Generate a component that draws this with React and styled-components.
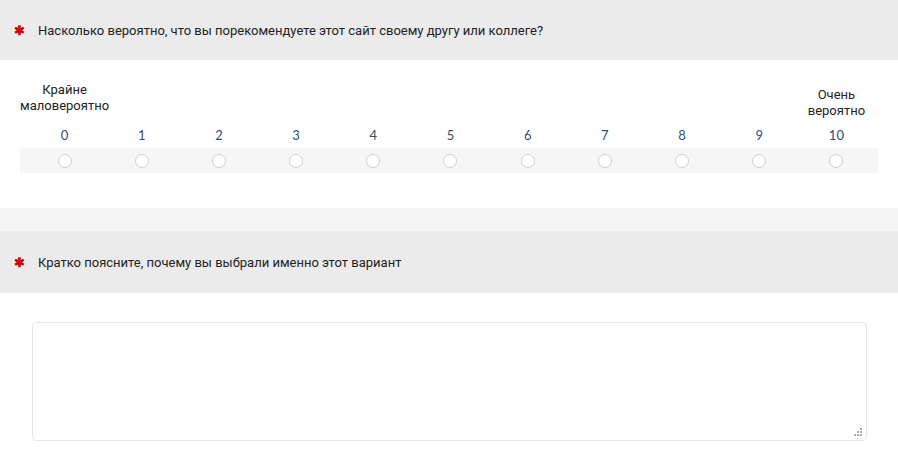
import React from 'react'
import styled, { createGlobalStyle } from 'styled-components'

const GlobalStyle = createGlobalStyle`
    html, body {
        margin: 0;
        padding: 0;
        background: #ffffff;
        overflow: hidden;
    }
    body {
        font-family: Roboto, "Noto Sans", Arial, sans-serif;
        color: #222222;
    }
`

const scale = [0, 1, 2, 3, 4, 5, 6, 7, 8, 9, 10]

function App() {
    return (
        <>
            <GlobalStyle />
            <Page>
                <QuestionHeader $height={60}>
                    <Required>✱</Required>
                    <span>Насколько вероятно, что вы порекомендуете этот сайт своему другу или коллеге?</span>
                </QuestionHeader>

                <ScaleBody>
                    <ScaleGrid>
                        {scale.map((n) => (
                            <LabelCell key={n} $drop={n === 10}>
                                {n === 0 && <span>Крайне<br />маловероятно</span>}
                                {n === 10 && <span>Очень<br />вероятно</span>}
                            </LabelCell>
                        ))}
                    </ScaleGrid>
                    <ScaleGrid>
                        {scale.map((n) => (
                            <Number key={n}>{n}</Number>
                        ))}
                    </ScaleGrid>
                    <RadioRow>
                        {scale.map((n) => (
                            <RadioCell key={n}>
                                <Radio type='radio' name='nps' aria-label={String(n)} />
                            </RadioCell>
                        ))}
                    </RadioRow>
                </ScaleBody>

                <Spacer />

                <QuestionHeader $height={62}>
                    <Required>✱</Required>
                    <span>Кратко поясните, почему вы выбрали именно этот вариант</span>
                </QuestionHeader>

                <AnswerBody>
                    <TextBox>
                        <TextArea />
                        <Grip width='10' height='10' viewBox='0 0 10 10'>
                            <rect x='7' y='1' width='2' height='2' />
                            <rect x='4' y='4' width='2' height='2' />
                            <rect x='7' y='4' width='2' height='2' />
                            <rect x='1' y='7' width='2' height='2' />
                            <rect x='4' y='7' width='2' height='2' />
                            <rect x='7' y='7' width='2' height='2' />
                        </Grip>
                    </TextBox>
                </AnswerBody>
            </Page>
        </>
    )
}

export default App

const Page = styled.div`
    width: 898px;
    display: flex;
    flex-direction: column;
`

const QuestionHeader = styled.div`
    height: ${({ $height }) => $height}px;
    background: #ebebeb;
    display: flex;
    align-items: center;
    padding-left: 14px;
    gap: 14px;
    font-size: 13px;
    color: #222222;
`

const Required = styled.span`
    color: #cc0000;
    font-size: 13px;
    width: 10px;
    line-height: 1;
    font-weight: bold;
`

const ScaleBody = styled.div`
    padding: 21px 20px 35px 20px;
    display: flex;
    flex-direction: column;
`

const ScaleGrid = styled.div`
    display: grid;
    grid-template-columns: repeat(11, minmax(0, 1fr));
    width: 858px;
    box-sizing: border-box;
    padding-left: 6px;
    padding-right: 3px;
`

const LabelCell = styled.div`
    display: flex;
    justify-content: center;
    align-items: flex-start;
    height: 46px;
    padding-top: ${({ $drop }) => ($drop ? '6px' : '1px')};
    box-sizing: border-box;
    font-size: 13px;
    line-height: 16px;
    text-align: center;
    white-space: nowrap;
    color: #222222;
`

const Number = styled.div`
    text-align: center;
    font-family: Lato, "Open Sans", sans-serif;
    font-size: 13px;
    line-height: 16px;
    color: #2f4e72;
    padding-bottom: 5px;
`

const RadioRow = styled(ScaleGrid)`
    background: #f6f6f6;
    height: 25px;
`

const RadioCell = styled.div`
    display: flex;
    justify-content: center;
    align-items: center;
`

const Radio = styled.input`
    appearance: none;
    margin: 0;
    width: 14px;
    height: 14px;
    border: 1px solid #cfcfcf;
    border-radius: 50%;
    background: #ffffff;
    box-sizing: border-box;
`

const Spacer = styled.div`
    height: 23px;
    background: #f5f5f5;
`

const AnswerBody = styled.div`
    padding: 29px 31px 18px 32px;
`

const TextBox = styled.div`
    position: relative;
    height: 119px;
`

const TextArea = styled.textarea`
    display: block;
    width: 100%;
    height: 100%;
    box-sizing: border-box;
    border: 1px solid #e3e7ec;
    border-radius: 4px;
    resize: none;
    outline: none;
    background: #ffffff;
    font-family: Roboto, sans-serif;
    font-size: 13px;
`

const Grip = styled.svg`
    position: absolute;
    right: 4px;
    bottom: 4px;
    fill: #a8a8a8;
`
